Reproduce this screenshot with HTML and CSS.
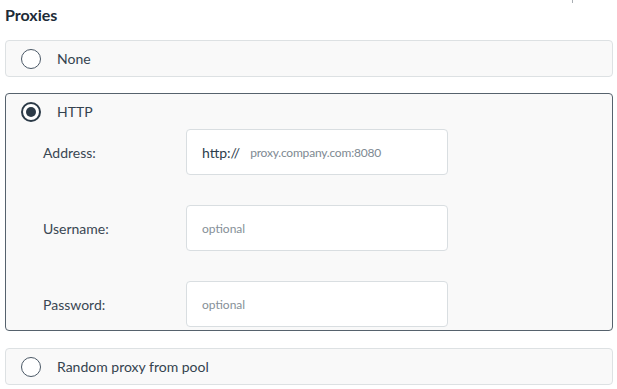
FILE: index.html
```html
<!DOCTYPE html>
<html>
<head>
<meta name="viewport" content="width=device-width, initial-scale=1">
<link rel="stylesheet" href="styles.css">
</head>
<body>

<div class="edge-mark"></div>

<div class="page">
  <h2 class="title">Proxies</h2>

  <div class="option">
    <div class="option-head">
      <span class="radio"></span>
      <span class="option-label">None</span>
    </div>
  </div>

  <div class="option selected">
    <div class="option-head">
      <span class="radio checked"></span>
      <span class="option-label">HTTP</span>
    </div>
    <div class="fields">
      <label class="field-label" for="addr">Address:</label>
      <div class="field">
        <span class="prefix">http://</span>
        <span class="value" id="addr">proxy.company.com:8080</span>
      </div>

      <label class="field-label" for="user">Username:</label>
      <div class="field">
        <input type="text" id="user" placeholder="optional">
      </div>

      <label class="field-label" for="pass">Password:</label>
      <div class="field">
        <input type="password" id="pass" placeholder="optional">
      </div>
    </div>
  </div>

  <div class="option">
    <div class="option-head">
      <span class="radio"></span>
      <span class="option-label">Random proxy from pool</span>
    </div>
  </div>
</div>

</body>
</html>
```

FILE: styles.css
```css
body {
    margin: 0;
    font-family: Lato, "Open Sans", sans-serif;
    color: #34434f;
    background: #fff;
}

.page {
    padding: 0 5px;
}

.edge-mark {
    position: absolute;
    left: 572px;
    top: 0;
    width: 1px;
    height: 3px;
    background: #a9aeb3;
}

.title {
    margin: 6px 0 16px 0;
    font-size: 16px;
    line-height: 18px;
    font-weight: 700;
    color: #1d2b37;
}

/* Radio option cards */
.option {
    box-sizing: border-box;
    width: 608px;
    margin-bottom: 16px;
    background: #f9f9f9;
    border: 1px solid #dde1e3;
    border-radius: 4px;
    padding: 0 15px;
}

.option.selected {
    border-color: #56626d;
    padding-bottom: 3px;
    margin-bottom: 17px;
}

.option-head {
    display: flex;
    align-items: center;
    gap: 16px;
    height: 35px;
}

.option-label {
    font-size: 14px;
}

.radio {
    box-sizing: border-box;
    width: 20px;
    height: 20px;
    border: 1.5px solid #4a5866;
    border-radius: 50%;
    background: #fff;
    display: flex;
    align-items: center;
    justify-content: center;
}

.radio.checked {
    border: 2px solid #2b3a47;
}

.radio.checked::after {
    content: "";
    width: 10px;
    height: 10px;
    border-radius: 50%;
    background: #2b3a47;
}

/* HTTP settings */
.fields {
    display: grid;
    grid-template-columns: 143px 262px;
    grid-auto-rows: 46px;
    row-gap: 30px;
    align-items: center;
    padding-left: 22px;
}

.field-label {
    font-size: 14px;
    color: #3a4753;
}

.field {
    box-sizing: border-box;
    height: 46px;
    background: #fff;
    border: 1px solid #d9dee1;
    border-radius: 4px;
    display: flex;
    align-items: center;
    padding: 0 15px;
    gap: 10px;
}

.prefix {
    font-size: 14px;
    color: #2c3d4c;
}

.value {
    font-size: 12px;
    letter-spacing: -0.2px;
    color: #7e8992;
}

.field input {
    border: none;
    outline: none;
    padding: 0;
    width: 100%;
    font-family: Lato, "Open Sans", sans-serif;
    font-size: 12px;
    color: #34434f;
    background: transparent;
}

.field input::placeholder {
    color: #858f98;
}
```
